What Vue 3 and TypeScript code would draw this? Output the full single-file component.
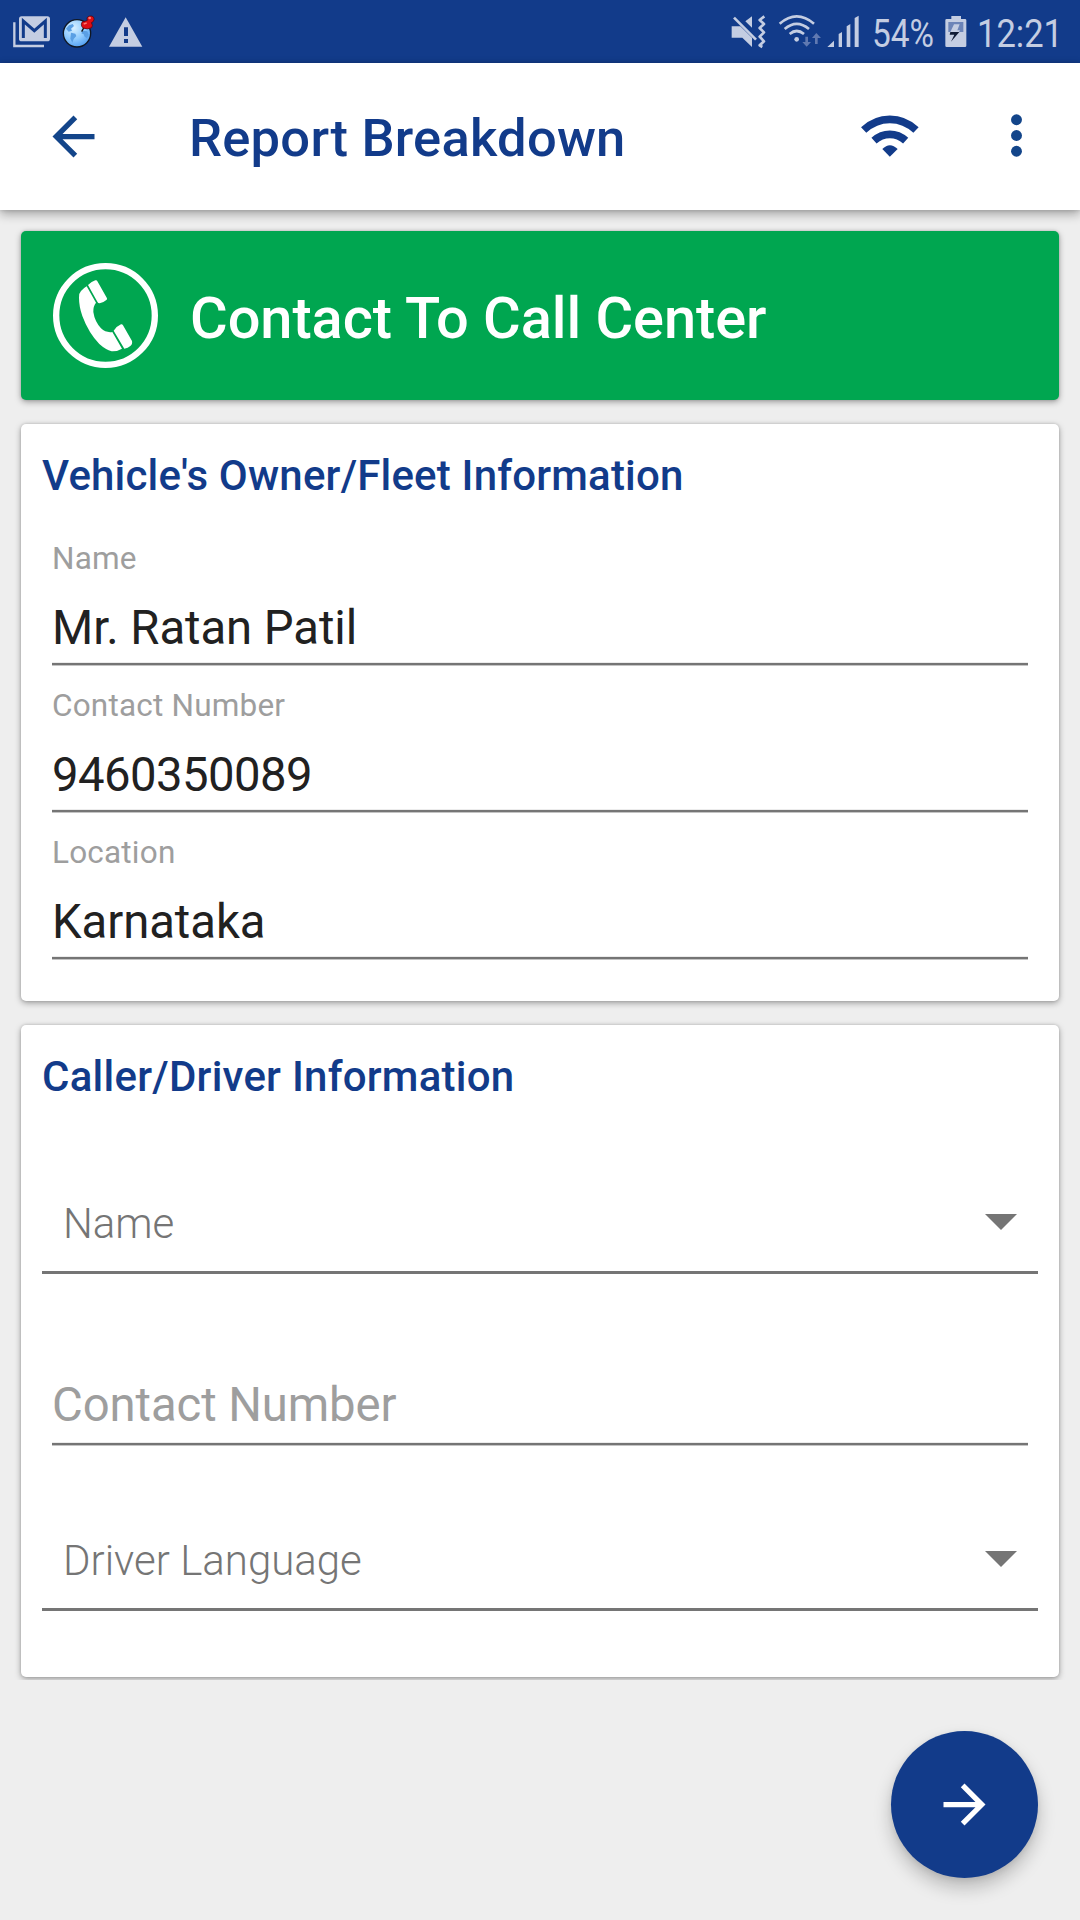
<script setup lang="ts">
interface Field {
  label: string
  value: string
  kind: string
}

const ownerFields: Field[] = [
  { label: 'Name', value: 'Mr. Ratan Patil', kind: 'text' },
  { label: 'Contact Number', value: '9460350089', kind: 'number' },
  { label: 'Location', value: 'Karnataka', kind: 'text' },
]
</script>

<template>
  <div class="screen">
    <div class="status-bar">
      <svg class="st-mail" width="37" height="32" viewBox="39 47 111 96">
        <path d="M43 66V137H132" fill="none" stroke="#c4cde2" stroke-width="7" />
        <rect x="57" y="48" width="93" height="75" rx="8" fill="#c4cde2" />
        <path d="M70 113V62L103 91L136 62V113" fill="none" stroke="#123b8a" stroke-width="9" />
      </svg>
      <svg class="st-globe" width="34" height="34" viewBox="186 45 102 102">
        <defs>
          <radialGradient id="sea" cx="38%" cy="30%" r="75%">
            <stop offset="0" stop-color="#d9f0ff" />
            <stop offset="0.55" stop-color="#8fcbff" />
            <stop offset="1" stop-color="#4f9df0" />
          </radialGradient>
        </defs>
        <circle cx="231" cy="100" r="41" fill="url(#sea)" stroke="#101722" stroke-width="4" />
        <path d="M198 86L207 76L218 72L222 78L213 86L216 92L206 95ZM213 98L226 101L229 108L221 117L217 128L211 116ZM248 92L262 94L266 104L261 115L254 110L251 103L244 100Z" fill="#5a9fe4" />
        <path d="M252 82L245 95" stroke="#111" stroke-width="4" />
        <path d="M244 72Q245 62 255 64L262 61Q258 50 270 48Q283 47 282 59Q281 66 274 68Q280 76 275 83Q262 90 249 84Q243 79 244 72Z" fill="#dc0d14" stroke="#4b0508" stroke-width="2" />
        <circle cx="269" cy="54" r="4" fill="#ff7a70" />
        <path d="M251 72L260 69" stroke="#ff7a70" stroke-width="4" />
      </svg>
      <svg class="st-warn" width="34" height="30" viewBox="326 47 102 90">
        <path d="M376 48L426 136H326Z" fill="#c4cde2" />
        <path d="M371 78H383V104H371ZM371 113H383V125H371Z" fill="#123b8a" />
      </svg>
      <div class="spacer"></div>
      <svg class="st-mute" width="36" height="34" viewBox="64 45 108 102">
        <path d="M66 79H92L127 113V141L98 113H66ZM107 64L127 49V83Z" fill="#c4cde2" />
        <path d="M73 53L139 119" stroke="#c4cde2" stroke-width="8" />
        <path d="M164 49L150 60L163 72L150 84L163 97L150 110L163 124L150 136L158 141" fill="none" stroke="#c4cde2" stroke-width="8" stroke-linejoin="round" />
      </svg>
      <svg class="st-wifi" width="44" height="34" viewBox="207 45 132 102">
        <g fill="none" stroke="#c4cde2" stroke-width="8">
          <path d="M212 71Q263 27 315 71" />
          <path d="M227 87Q263 56 300 87" />
          <path d="M242 102Q263 84 285 102" />
        </g>
        <circle cx="263" cy="118" r="7" fill="#c4cde2" />
        <path d="M289 110H297V126H306L293 140L280 126H289ZM318 132H326V114H336L322 99L309 114H318Z" fill="#6079b1" />
      </svg>
      <svg class="st-signal" width="32" height="34" viewBox="352 45 96 102">
        <path d="M353 141L373 122V141ZM387 102L397 96V141H387ZM411 79L422 72V141H411ZM435 54L447 47V141H435Z" fill="#c4cde2" />
      </svg>
      <svg class="st-pct" width="62" height="63" viewBox="0 0 62 63">
        <text x="0" y="47" textLength="62" lengthAdjust="spacingAndGlyphs">54%</text>
      </svg>
      <svg class="st-batt" width="22" height="34" viewBox="704 45 66 102">
        <path d="M723 48H752V57H764Q768 57 768 61V137Q768 141 764 141H709Q705 141 705 137V61Q705 57 709 57H723Z" fill="#c4cde2" />
        <rect x="714" y="66" width="45" height="30" fill="#6c84b8" />
        <path d="M731 73H748L741 91H749L746 96H720Z" fill="#c4cde2" />
        <path d="M720 96H747L722 125L732 104H718Z" fill="#111c36" />
      </svg>
      <svg class="st-time" width="86" height="63" viewBox="0 0 86 63">
        <text x="0" y="47" textLength="86" lengthAdjust="spacingAndGlyphs">12:21</text>
      </svg>
    </div>

    <header class="app-bar">
      <svg class="back" width="63" height="63" viewBox="0 0 24 24">
        <path d="M20 11H7.83l5.59-5.59L12 4l-8 8 8 8 1.41-1.41L7.83 13H20v-2z" fill="#13458a" />
      </svg>
      <h1 class="title">Report Breakdown</h1>
      <svg class="wifi" width="58" height="42" viewBox="122 165 174 126">
        <g fill="none" stroke="#123b8a" stroke-width="23">
          <path d="M130 210Q164 178 208.500 178Q253 178 287 210" />
          <path d="M161 242Q182 223 208.500 223Q235 223 256 242" />
        </g>
        <path d="M186 267Q208.500 244 232 267L208.500 290Z" fill="#123b8a" />
      </svg>
      <svg class="more" width="63" height="63" viewBox="0 0 24 24">
        <g fill="#13458a">
          <circle cx="12" cy="6" r="2.08" />
          <circle cx="12" cy="12" r="2.08" />
          <circle cx="12" cy="18" r="2.08" />
        </g>
      </svg>
    </header>

    <main class="content">
      <button class="call" type="button">
        <svg class="phone" width="105" height="105" viewBox="159 128 315 315">
          <circle cx="316.500" cy="285.500" r="148" fill="none" stroke="#fff" stroke-width="19" />
          <g fill="#fff">
            <path d="M264 194Q275 183 286 180Q291 179 293 184L321 234Q322 238 318 240Q309 248 299 249Q294 249 292 244Z" />
            <path d="M260 198L288 247Q279 258 280 275Q284 303 303 324Q318 338 337 335L366 385Q351 394 335 393Q317 388 298 371Q266 338 247 287Q237 258 237 232Q236 219 243 212Q250 204 260 198Z" />
            <path d="M341 331Q351 317 363 312Q367 311 369 315L396 362Q398 372 391 377Q384 384 373 385Z" />
          </g>
        </svg>
        <span class="call-text">Contact To Call Center</span>
      </button>

      <section class="card">
        <h2 class="heading">Vehicle's Owner/Fleet Information</h2>
        <div class="fields">
          <div v-for="f in ownerFields" :key="f.label" class="field">
            <label class="label">{{ f.label }}</label>
            <div class="value" :class="f.kind">{{ f.value }}</div>
            <div class="rule"></div>
          </div>
        </div>
      </section>

      <section class="card">
        <h2 class="heading caller">Caller/Driver Information</h2>
        <div class="select first">
          <span>Name</span>
          <svg width="32" height="16" viewBox="0 0 32 16"><path d="M0 0H32L16 16Z" fill="#757575" /></svg>
        </div>
        <div class="hint-field">
          <div class="hint">Contact Number</div>
          <div class="rule"></div>
        </div>
        <div class="select second">
          <span>Driver Language</span>
          <svg width="32" height="16" viewBox="0 0 32 16"><path d="M0 0H32L16 16Z" fill="#757575" /></svg>
        </div>
      </section>
    </main>

    <footer class="footer">
      <button class="fab" type="button">
        <svg width="63" height="63" viewBox="0 0 24 24">
          <path d="M12 4l-1.410 1.410L16.170 11H4v2h12.170l-5.580 5.590L12 20l8-8z" fill="#fff" />
        </svg>
      </button>
    </footer>
  </div>
</template>

<style>
body {
  background: #eeeeee;
}
</style>

<style scoped>
.screen {
  width: 1080px;
  height: 1920px;
  overflow: hidden;
  background: #eeeeee;
  font-family: Roboto, 'Liberation Sans', sans-serif;
  display: flex;
  flex-direction: column;
}
.screen svg {
  display: block;
  flex: none;
}
button {
  border: 0;
  padding: 0;
  font: inherit;
}
h1,
h2 {
  margin: 0;
  font-weight: 500;
  white-space: nowrap;
}

.status-bar {
  height: 63px;
  flex: none;
  box-sizing: border-box;
  padding: 0 17px 0 13px;
  background: #123b8a;
  display: flex;
  align-items: center;
}
.status-bar svg { overflow: visible; }
.status-bar text {
  font-size: 39.500px;
  fill: #c4cde2;
}
.st-globe { margin-left: 12px; }
.st-warn { margin-left: 13px; }
.spacer { flex: 1; }
.st-wifi { margin-left: 11px; }
.st-signal { margin-left: 5px; }
.st-pct { margin-left: 13px; }
.st-batt { margin-left: 11px; }
.st-time { margin-left: 10px; }

.app-bar {
  height: 147px;
  flex: none;
  box-sizing: border-box;
  padding: 0 32px 0 42px;
  background: #fff;
  display: flex;
  align-items: center;
  position: relative;
  z-index: 2;
  box-shadow: 0 4px 10px rgba(0, 0, 0, 0.32), 0 0 4px rgba(0, 0, 0, 0.15);
}
.title {
  flex: 1;
  margin-left: 84px;
  padding-top: 3px;
  font-size: 52.500px;
  line-height: 62px;
  letter-spacing: 0.230px;
  color: #123b8a;
}
.wifi { margin: -1px 66px 0 0; }
.more { margin-top: -2px; }

.content {
  height: 1470px;
  flex: none;
  box-sizing: border-box;
  padding: 21px 21px 0;
  overflow: hidden;
  display: flex;
  flex-direction: column;
  gap: 24px;
}
.call,
.card {
  flex: none;
  box-sizing: border-box;
  border-radius: 5px;
  box-shadow: 0 2px 6px rgba(0, 0, 0, 0.34), 0 0 3px rgba(0, 0, 0, 0.15);
}
.call {
  height: 169px;
  padding-left: 32px;
  display: flex;
  align-items: center;
  background: #00a650;
  color: #fff;
}
.call-text {
  margin-left: 32px;
  padding-top: 5px;
  font-size: 57.750px;
  font-weight: 500;
  line-height: 68px;
  letter-spacing: -0.060px;
}
.card {
  background: #fff;
  padding: 27px 21px 0;
}
.card:nth-of-type(1) { height: 577px; }
.card:nth-of-type(2) { padding-bottom: 66px; }
.heading {
  font-size: 42px;
  line-height: 50px;
  letter-spacing: 0.190px;
  color: #123b8a;
}
.heading.caller { letter-spacing: 0.240px; }
.fields {
  margin: 39px 10px 0;
  display: flex;
  flex-direction: column;
  gap: 21px;
}
.label {
  display: block;
  height: 37px;
  font-size: 31.500px;
  line-height: 37px;
  letter-spacing: 0.200px;
  color: #9e9e9e;
}
.value {
  margin-top: 23px;
  height: 62px;
  font-size: 47.250px;
  line-height: 56px;
  letter-spacing: -0.060px;
  color: #212121;
}
.value.number { letter-spacing: -0.550px; }
.rule {
  height: 4px;
  background: linear-gradient(#ececec 0 1px, #757575 1px 3px, #c4c4c4 3px);
}
.select {
  box-sizing: border-box;
  height: 102px;
  padding: 0 21px;
  border-bottom: 3px solid #757575;
  display: flex;
  align-items: center;
  justify-content: space-between;
  font-size: 42px;
  font-weight: 300;
  line-height: 50px;
  color: #757575;
}
.select span { padding-top: 4px; }
.select.first { margin-top: 70px; }
.select.second { margin-top: 63px; }
.hint-field { margin: 103px 10px 0; }
.hint {
  height: 65px;
  font-size: 47.250px;
  line-height: 56px;
  letter-spacing: -0.090px;
  color: #9e9e9e;
}

.footer {
  flex: 1;
  display: flex;
  justify-content: flex-end;
  align-items: flex-end;
  padding: 0 42px;
  margin-bottom: 42px;
}
.fab {
  width: 147px;
  height: 147px;
  border-radius: 50%;
  background: #123b8a;
  display: flex;
  align-items: center;
  justify-content: center;
  box-shadow: 0 10px 18px rgba(0, 0, 0, 0.22), 0 2px 6px rgba(0, 0, 0, 0.08);
}
</style>
